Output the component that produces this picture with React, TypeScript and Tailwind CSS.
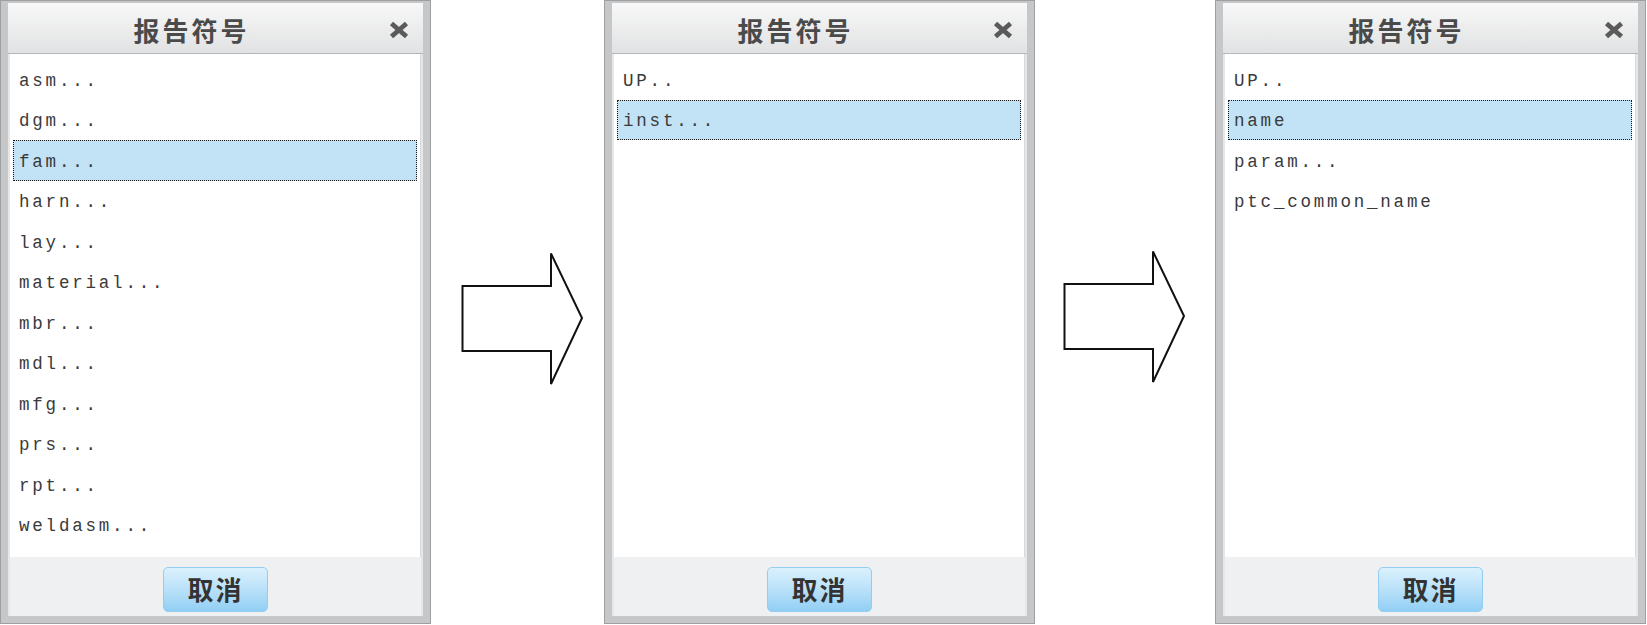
import React from 'react';

const mono = { fontFamily: '"Liberation Mono", "DejaVu Sans Mono", monospace' };
const cjk = { fontFamily: '"Noto Sans CJK SC", "Noto Sans", sans-serif' };

function CloseIcon() {
  return (
    <svg width="20" height="18" viewBox="0 0 20 18">
      <path d="M2.5 2.5 L17.5 15.5 M17.5 2.5 L2.5 15.5" stroke="#5a5a5a" strokeWidth="4.8" strokeLinecap="butt" />
    </svg>
  );
}

function Arrow() {
  return (
    <svg width="123" height="134" viewBox="0 0 123 134" className="shrink-0">
      <polygon
        points="1.5,34 90,34 90,1.5 121,66 90,132 90,99 1.5,99"
        fill="white"
        stroke="#111"
        strokeWidth="2"
        strokeLinejoin="miter"
      />
    </svg>
  );
}

function Dialog({ items, selected }: { items: string[]; selected: number }) {
  return (
    <div className="w-[431px] h-[624px] shrink-0 flex flex-col bg-[#c5c7c9] border border-[#9d9fa1] pt-[2px] px-[7px] pb-[7px]">
      {/* title bar */}
      <div className="h-[51px] flex items-center bg-gradient-to-b from-[#f8f8f8] to-[#e1e2e3] border-b border-[#b4b6b8] pt-[4px]">
        <div className="flex-1 text-center text-[26px] font-bold tracking-[3px] text-[#4a4a4a] leading-none" style={cjk}>
          报告符号
        </div>
        <div className="w-[48px] flex justify-center">
          <CloseIcon />
        </div>
      </div>

      {/* body */}
      <div className="flex-1 flex flex-col bg-[#e6e7e8] px-[2px]">
        <div className="flex-1 bg-white pt-[5px] px-[3px] border-r border-[#d8d9da]">
          {items.map((item, i) => (
            <div
              key={item}
              className={
                'h-[40.5px] flex items-center pl-[5px] pt-[3px] text-[17.5px] tracking-[2.8px] text-[#3a3a3a] ' +
                (i === selected ? 'bg-[#c1e3f5] border border-dotted border-[#1a1a1a]' : 'border border-transparent')
              }
              style={mono}
            >
              {item}
            </div>
          ))}
        </div>
        <div className="h-[59px] flex items-center justify-center bg-[#eff0f1] pt-[5px]">
          <button
            type="button"
            className="w-[105px] h-[45px] rounded-[5px] border border-[#93cdf1] bg-gradient-to-b from-[#dbf1fd] via-[#b9e1f9] to-[#92cff4] text-[26px] font-bold text-[#333] leading-none tracking-[2px]"
            style={cjk}
          >
            取消
          </button>
        </div>
      </div>
    </div>
  );
}

export default function App() {
  return (
    <div className="w-[1647px] h-[625px] bg-white flex items-start overflow-hidden">
      <Dialog
        items={['asm...', 'dgm...', 'fam...', 'harn...', 'lay...', 'material...', 'mbr...', 'mdl...', 'mfg...', 'prs...', 'rpt...', 'weldasm...']}
        selected={2}
      />
      <div className="ml-[30px] mr-[20px] mt-[252px]">
        <Arrow />
      </div>
      <Dialog items={['UP..', 'inst...']} selected={1} />
      <div className="ml-[28px] mr-[29px] mt-[250px]">
        <Arrow />
      </div>
      <Dialog items={['UP..', 'name', 'param...', 'ptc_common_name']} selected={1} />
    </div>
  );
}
